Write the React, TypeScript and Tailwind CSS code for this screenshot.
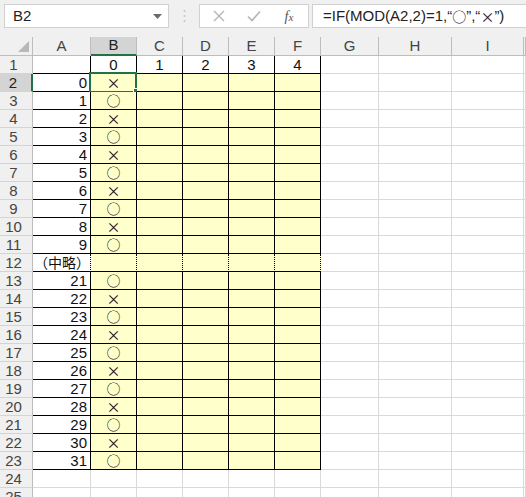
import React from "react";

const colLetters = ["", "A", "B", "C", "D", "E", "F", "G", "H", "I", ""];

type Row = { a: string; b: string; special?: boolean; head?: string[] };

function buildRows(): Row[] {
  const rows: Row[] = [];
  rows.push({ a: "", b: "0", head: ["1", "2", "3", "4"] });
  for (let i = 0; i <= 9; i++) rows.push({ a: String(i), b: i % 2 ? "○" : "×" });
  rows.push({ a: "（中略）", b: "", special: true });
  for (let i = 21; i <= 31; i++) rows.push({ a: String(i), b: i % 2 ? "○" : "×" });
  rows.push({ a: "", b: "" });
  rows.push({ a: "", b: "" });
  return rows;
}

const rows = buildRows();

const FONT = "font-['Liberation_Sans','Noto_Sans_CJK_JP',sans-serif]";
const CJK = "font-['Noto_Sans_CJK_JP',sans-serif]";

function Cell({ r, c }: { r: number; c: number }) {
  const row = rows[r - 1];
  const inTable = r >= 1 && r <= 23 && c >= 1 && c <= 6;
  const yellow = r >= 2 && r <= 23 && c >= 2 && c <= 6;
  const dotted = r === 12 && c >= 1 && c <= 6;
  let content: React.ReactNode = null;
  let align = "justify-center";
  if (c === 1) {
    content = row.a;
    align = row.special ? "justify-start pl-[1px]" : "justify-end pr-[3px]";
  } else if (c === 2) {
    content = row.b;
  } else if (r === 1 && c >= 3 && c <= 6) {
    content = row.head ? row.head[c - 3] : null;
  }
  const isMark = (c === 2 && r >= 2) || (c === 1 && row.special);
  return (
    <div
      className={
        "relative flex items-center border-r border-b " +
        align +
        " " +
        (inTable ? "border-black " : "border-[#d9d9d9] ") +
        (dotted ? "[border-right-style:dotted] " : "") +
        (yellow ? "bg-[#ffffcc]" : "bg-white")
      }
    >
      <span
        className={
          isMark
            ? CJK + " block text-[14px] leading-[17px] text-[#111]"
            : "block text-[15px] leading-[17px] text-[#111]"
        }
      >
        {content}
      </span>
      {r === 2 && c === 2 && (
        <>
          <div className="absolute left-[-2px] top-[-2px] w-[48px] h-[21px] border-2 border-[#217346]" />
          <div className="absolute left-[42px] top-[14px] w-[6px] h-[6px] bg-[#217346] border border-white" />
        </>
      )}
    </div>
  );
}

export default function App() {
  return (
    <div className={"w-[526px] h-[497px] overflow-hidden bg-[#f0f0f0] " + FONT}>
      {/* formula bar */}
      <div className="flex h-[37px] pt-[4px] pl-[4px]">
        <div className="relative flex w-[165px] h-[24px] items-center bg-white border border-[#d0d0d0] pl-[8px] text-[15px] text-[#222]">
          B2
          <svg className="absolute right-[6px] top-[9px]" width="9" height="5" viewBox="0 0 9 5">
            <path d="M0 0 L9 0 L4.5 5 Z" fill="#6b6b6b" />
          </svg>
        </div>
        <div className="flex w-[30px] h-[24px] items-center justify-center">
          <svg width="3" height="14" viewBox="0 0 3 14">
            <circle cx="1.5" cy="2" r="1" fill="#c4c4c4" />
            <circle cx="1.5" cy="7" r="1" fill="#c4c4c4" />
            <circle cx="1.5" cy="12" r="1" fill="#c4c4c4" />
          </svg>
        </div>
        <div className="flex w-[110px] h-[24px] items-center bg-white border border-[#d0d0d0]">
          <div className="flex w-[36px] justify-center pl-[2px]">
            <svg width="12" height="12" viewBox="0 0 12 12">
              <path d="M1 1 L11 11 M11 1 L1 11" stroke="#b4b4b4" strokeWidth="1.3" />
            </svg>
          </div>
          <div className="flex w-[36px] justify-center">
            <svg width="14" height="12" viewBox="0 0 14 12">
              <path d="M1 6.5 L5 10.5 L13 1.5" stroke="#b4b4b4" strokeWidth="1.6" fill="none" />
            </svg>
          </div>
          <div className="flex w-[34px] justify-center font-['Liberation_Serif',serif] italic text-[14px] text-[#555]">
            <span>f</span>
            <span className="text-[11px] mt-[3px]">x</span>
          </div>
        </div>
        <div className="ml-[3px] flex flex-1 h-[24px] items-center bg-white border-l border-t border-b border-[#d0d0d0] pl-[10px] text-[15px] text-[#222] whitespace-nowrap">
          <span>=IF(MOD(A2,2)=1,“</span>
          <span className={CJK + " text-[14px]"}>○</span>
          <span>”,“</span>
          <span className={CJK + " text-[14px]"}>×</span>
          <span>”)</span>
        </div>
      </div>
      {/* sheet */}
      <div className="grid grid-cols-[33px_58px_46px_46px_46px_46px_46px_58px_73px_72px_1fr] grid-rows-[19px_repeat(25,18px)]">
        <div className="relative border-r border-b border-[#bdbdbd] bg-[#f0f0f0]">
          <svg className="absolute right-[3px] bottom-[3px]" width="11" height="11" viewBox="0 0 11 11">
            <path d="M11 0 L11 11 L0 11 Z" fill="#b8b8b8" />
          </svg>
        </div>
        {colLetters.slice(1).map((l, i) => (
          <div
            key={"h" + i}
            className={
              "flex items-center justify-center border-r text-[15px] " +
              (l === "B"
                ? "bg-[#d4d4d4] border-b-2 border-b-[#217346] border-r-[#bdbdbd] text-[#222]"
                : "bg-[#f0f0f0] border-b border-[#bdbdbd] text-[#444]")
            }
          >
            {l}
          </div>
        ))}
        {rows.map((_, ri) => {
          const r = ri + 1;
          return (
            <React.Fragment key={"r" + r}>
              <div
                className={
                  "flex items-center justify-center pr-[5px] text-[15px] leading-[17px] border-b border-[#d4d4d4] " +
                  (r === 2
                    ? "bg-[#d4d4d4] border-r-2 border-r-[#217346] text-[#222]"
                    : "bg-[#f0f0f0] border-r border-r-[#bdbdbd] text-[#444]")
                }
              >
                {r}
              </div>
              {Array.from({ length: 10 }, (_, ci) => (
                <Cell key={ci} r={r} c={ci + 1} />
              ))}
            </React.Fragment>
          );
        })}
      </div>
    </div>
  );
}
